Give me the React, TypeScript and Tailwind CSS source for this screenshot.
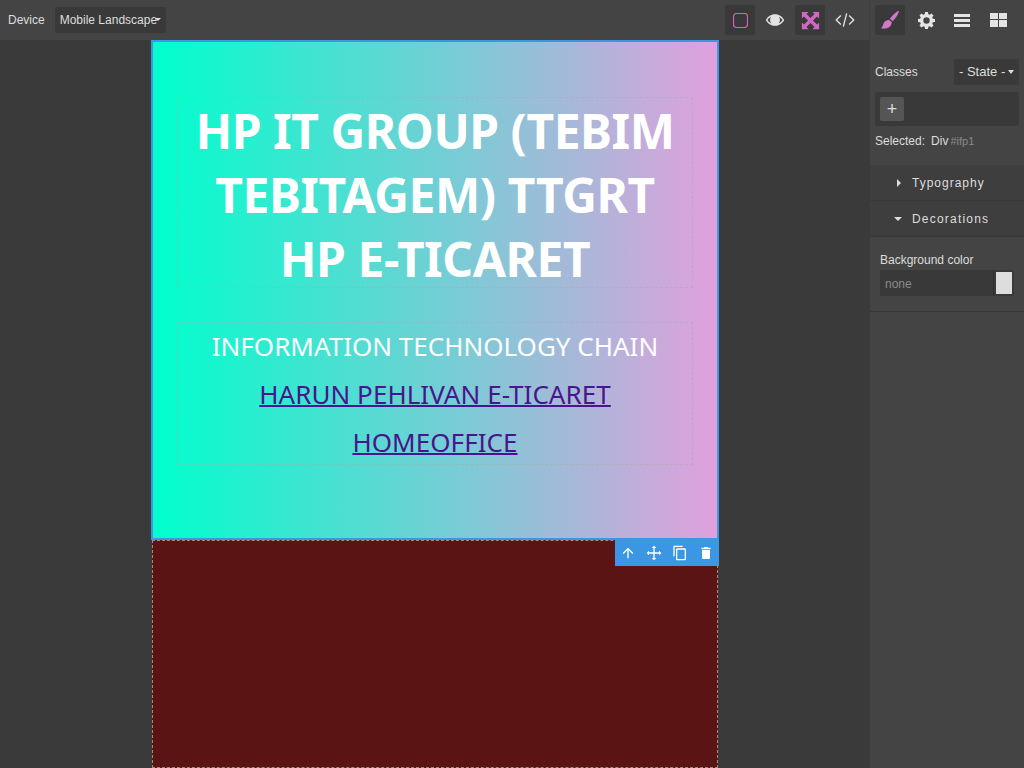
const Sans = '[font-family:"Liberation_Sans",Arial,sans-serif]'

function Brush() {
  return (
    <svg viewBox="0 0 24 24" className="w-[22px] h-[22px] fill-[#d278c9]">
      <path d="M20.7 2.2c.6-.3 1.2.2 1 .9-.9 3-3.700 7.500-6.700 10.200l-3.200-2.600C14.500 7.500 17.600 3.800 20.700 2.200z" />
      <path d="M10.800 11.700l3.200 2.700c-.2 3.300-2.600 6.400-6.800 6.900-2 .3-3.900.100-5.200-.6 1.300-.7 2-1.700 2.300-3.200.5-2.800 2.700-5.300 6.500-5.800z" />
    </svg>
  )
}

function Arrows() {
  return (
    <svg viewBox="0 0 24 24" className="w-[23px] h-[23px] fill-[#cf68c0]">
      <path d="M3 3h7L7.800 5.200 12 9.400l4.200-4.200L14 3h7v7l-2.200-2.200L14.600 12l4.200 4.200L21 14v7h-7l2.200-2.200L12 14.600l-4.200 4.200L10 21H3v-7l2.200 2.200L9.400 12 5.200 7.800 3 10z" />
    </svg>
  )
}

function Eye() {
  return (
    <svg viewBox="0 0 24 24" className="w-[20px] h-[20px] fill-[#e4e4e4]">
      <path d="M12 5C7 5 3 8 1 12c2 4 6 7 11 7s9-3 11-7c-2-4-6-7-11-7zm0 12c-4 0-7.200-2-9-5 1-1.700 2.500-3.100 4.400-4a6 6 0 1 0 9.200 0c1.900.9 3.400 2.300 4.400 4-1.800 3-5 5-9 5z" />
      <circle cx="12" cy="10.500" r="4.500" />
    </svg>
  )
}

function Gear() {
  return (
    <svg viewBox="0 0 24 24" className="w-[17px] h-[17px] fill-[#e4e4e4]">
      <path fillRule="evenodd" d="M10 0h4l.6 3.100 1.900.8 2.600-1.800 2.800 2.800-1.800 2.600.8 1.900L24 10v4l-3.100.6-.8 1.900 1.800 2.600-2.800 2.800-2.600-1.800-1.900.8L14 24h-4l-.6-3.100-1.900-.8-2.600 1.800-2.800-2.800 1.800-2.600-.8-1.900L0 14v-4l3.100-.6.800-1.900-1.800-2.600 2.800-2.800 2.600 1.800 1.900-.8zM12 7.500a4.500 4.500 0 1 0 0 9 4.500 4.500 0 0 0 0-9z" />
    </svg>
  )
}

function Bars() {
  return (
    <div className="flex flex-col gap-[2px] w-[16px]">
      <div className="h-[3px] bg-[#e4e4e4]" />
      <div className="h-[3px] bg-[#e4e4e4]" />
      <div className="h-[3px] bg-[#e4e4e4]" />
    </div>
  )
}

function Blocks() {
  return (
    <div className="grid grid-cols-2 gap-[1px] w-[17px]">
      <div className="h-[6px] bg-[#e4e4e4]" />
      <div className="h-[6px] bg-[#e4e4e4]" />
      <div className="h-[7px] bg-[#e4e4e4]" />
      <div className="h-[7px] bg-[#e4e4e4]" />
    </div>
  )
}

function TopIcon({ active, children }: { active?: boolean; children: React.ReactNode }) {
  return (
    <div className={`w-[30px] h-[30px] rounded-[2px] flex items-center justify-center ${active ? "bg-[#393939]" : ""}`}>
      {children}
    </div>
  )
}

function Caret({ open }: { open?: boolean }) {
  return open ? (
    <div className="w-0 h-0 border-x-[4px] border-x-transparent border-t-[4px] border-t-[#dddddd]" />
  ) : (
    <div className="w-0 h-0 border-y-[4px] border-y-transparent border-l-[4px] border-l-[#dddddd]" />
  )
}

function ToolIcon({ d }: { d: string }) {
  return (
    <svg viewBox="0 0 24 24" className="w-[16px] h-[16px] fill-white">
      <path d={d} />
    </svg>
  )
}

export default function App() {
  return (
    <div className={`h-[768px] w-[1024px] overflow-hidden flex flex-col bg-[#3a3a3a] text-[#dddddd] text-[12px] ${Sans}`}>
      {/* top bar */}
      <div className="h-[41px] shrink-0 flex bg-[#444444] border-b border-[#3a3a3a]">
        <div className="w-[870px] flex items-center pl-[8px] pr-[9px] border-r border-[#3f3f3f]">
          <span>Device</span>
          <div className="relative ml-[10px] w-[111px] h-[26px] bg-[#393939] rounded-[2px] flex items-center pl-[5px] whitespace-nowrap">
            Mobile Landscape
            <div className="absolute right-[5px] top-[11px] w-0 h-0 border-x-[3px] border-x-transparent border-t-[3px] border-t-[#dddddd]" />
          </div>
          <div className="ml-auto flex items-center gap-[5px]">
            <TopIcon active>
              <svg viewBox="0 0 15 15" className="w-[15px] h-[15px]">
                <rect x="0.5" y="0.5" width="14" height="14" rx="3" fill="none" stroke="#d65fc8" strokeWidth="1.200" />
              </svg>
            </TopIcon>
            <TopIcon><Eye /></TopIcon>
            <TopIcon active><Arrows /></TopIcon>
            <TopIcon>
              <svg viewBox="0 0 24 24" className="w-[20px] h-[20px] fill-none stroke-[#e4e4e4] stroke-[1.600]">
                <path d="M7 6.500 1.500 12 7 17.500M17 6.500l5.500 5.500L17 17.500M14 4l-4 16" />
              </svg>
            </TopIcon>
          </div>
        </div>
        <div className="flex-1 flex items-center pl-[5px] gap-[6px]">
          <TopIcon active><Brush /></TopIcon>
          <TopIcon><Gear /></TopIcon>
          <TopIcon><Bars /></TopIcon>
          <TopIcon><Blocks /></TopIcon>
        </div>
      </div>

      <div className="flex-1 flex min-h-0">
        {/* canvas */}
        <div className="w-[869px] pl-[151px] -mt-[1px]">
          <div className="relative w-[568px]">
            <div className="h-[500px] border-2 border-[#3b97e3] bg-[linear-gradient(to_right,#00ffcc,#e0a0dd)] pt-[55px] px-[24px] [font-family:'Noto_Sans',sans-serif] text-center text-white">
              <h1 className="h-[191px] border border-dashed border-[#aaaaaa]/50 text-[48px] leading-[64px] font-bold pt-[1px] px-[10px] tracking-[-0.450px]">
                HP IT GROUP (TEBIM TEBITAGEM) TTGRT HP E-TICARET
              </h1>
              <div className="mt-[34px] h-[143px] border border-dashed border-[#aaaaaa]/50 text-[26px] leading-[48px]">
                <div className="-mt-[1px]">INFORMATION TECHNOLOGY CHAIN</div>
                <a href="#" className="text-[#4a148c] underline decoration-2 block px-[60px] tracking-[0.050px]">HARUN PEHLIVAN E-TICARET HOMEOFFICE</a>
              </div>
            </div>
            <div className="mx-[1px] h-[228px] border border-dashed border-[#a08c8c] bg-[#5a1414]" />
            <div className="absolute left-[464px] top-[500px] w-[104px] h-[26px] bg-[#3b97e3] flex items-center justify-around">
              <ToolIcon d="M4 12l1.41 1.41L11 7.830V20h2V7.830l5.580 5.590L20 12l-8-8-8 8z" />
              <ToolIcon d="M12 1l3.500 3.500H13V11h6.500V8.500L23 12l-3.500 3.500V13H13v6.500h2.500L12 23l-3.500-3.500H11V13H4.500v2.500L1 12l3.500-3.500V11H11V4.500H8.500z" />
              <ToolIcon d="M16 1H4c-1.100 0-2 .9-2 2v14h2V3h12V1zm3 4H8c-1.100 0-2 .9-2 2v14c0 1.100.9 2 2 2h11c1.100 0 2-.9 2-2V7c0-1.100-.9-2-2-2zm0 16H8V7h11v14z" />
              <ToolIcon d="M6 19c0 1.100.9 2 2 2h8c1.100 0 2-.9 2-2V7H6v12zM19 4h-3.500l-1-1h-5l-1 1H5v2h14V4z" />
            </div>
          </div>
        </div>

        {/* style panel */}
        <div className="flex-1 bg-[#444444] border-l border-[#3a3a3a] -mt-[1px]">
          <div className="h-[125px] px-[5px] pt-[19px]">
            <div className="flex items-center justify-between">
              <span>Classes</span>
              <div className="relative w-[65px] h-[26px] bg-[#393939] rounded-[2px] flex items-center pl-[5px] text-[13px] whitespace-nowrap">
                - State -
                <div className="absolute right-[5px] top-[11px] w-0 h-0 border-x-[3.500px] border-x-transparent border-t-[4px] border-t-[#dddddd]" />
              </div>
            </div>
            <div className="mt-[7px] h-[34px] bg-[#393939] rounded-[2px] p-[5px]">
              <div className="w-[24px] h-[24px] bg-[#555555] rounded-[2px] flex items-center justify-center text-[18px] leading-none">+</div>
            </div>
            <div className="mt-[6px] flex items-baseline gap-[6px]">
              <span>Selected:</span>
              <span>Div<span className="ml-[2px] text-[11px] text-[#8a8a8a]">#ifp1</span></span>
            </div>
          </div>
          <div className="h-[36px] bg-[#3e3e3e] border-b border-[#383838] flex items-center pl-[27px] gap-[11px] tracking-[1px]">
            <Caret />
            <span>Typography</span>
          </div>
          <div className="h-[36px] bg-[#3e3e3e] border-b border-[#383838] flex items-center pl-[24px] gap-[10px] tracking-[1.200px]">
            <Caret open />
            <span>Decorations</span>
          </div>
          <div className="h-[75px] border-b border-[#383838] px-[10px] pt-[16px]">
            <div className="leading-[14px]">Background color</div>
            <div className="mt-[3px] h-[26px] bg-[#393939] rounded-[2px] flex items-center pl-[5px] text-[#8a8a8a]">
              <span className="pt-[1px]">none</span>
              <div className="ml-auto h-full w-[21px] border-l border-[#303030] p-[2px]">
                <div className="w-full h-full bg-[#dddddd]" />
              </div>
            </div>
          </div>
        </div>
      </div>
    </div>
  )
}
